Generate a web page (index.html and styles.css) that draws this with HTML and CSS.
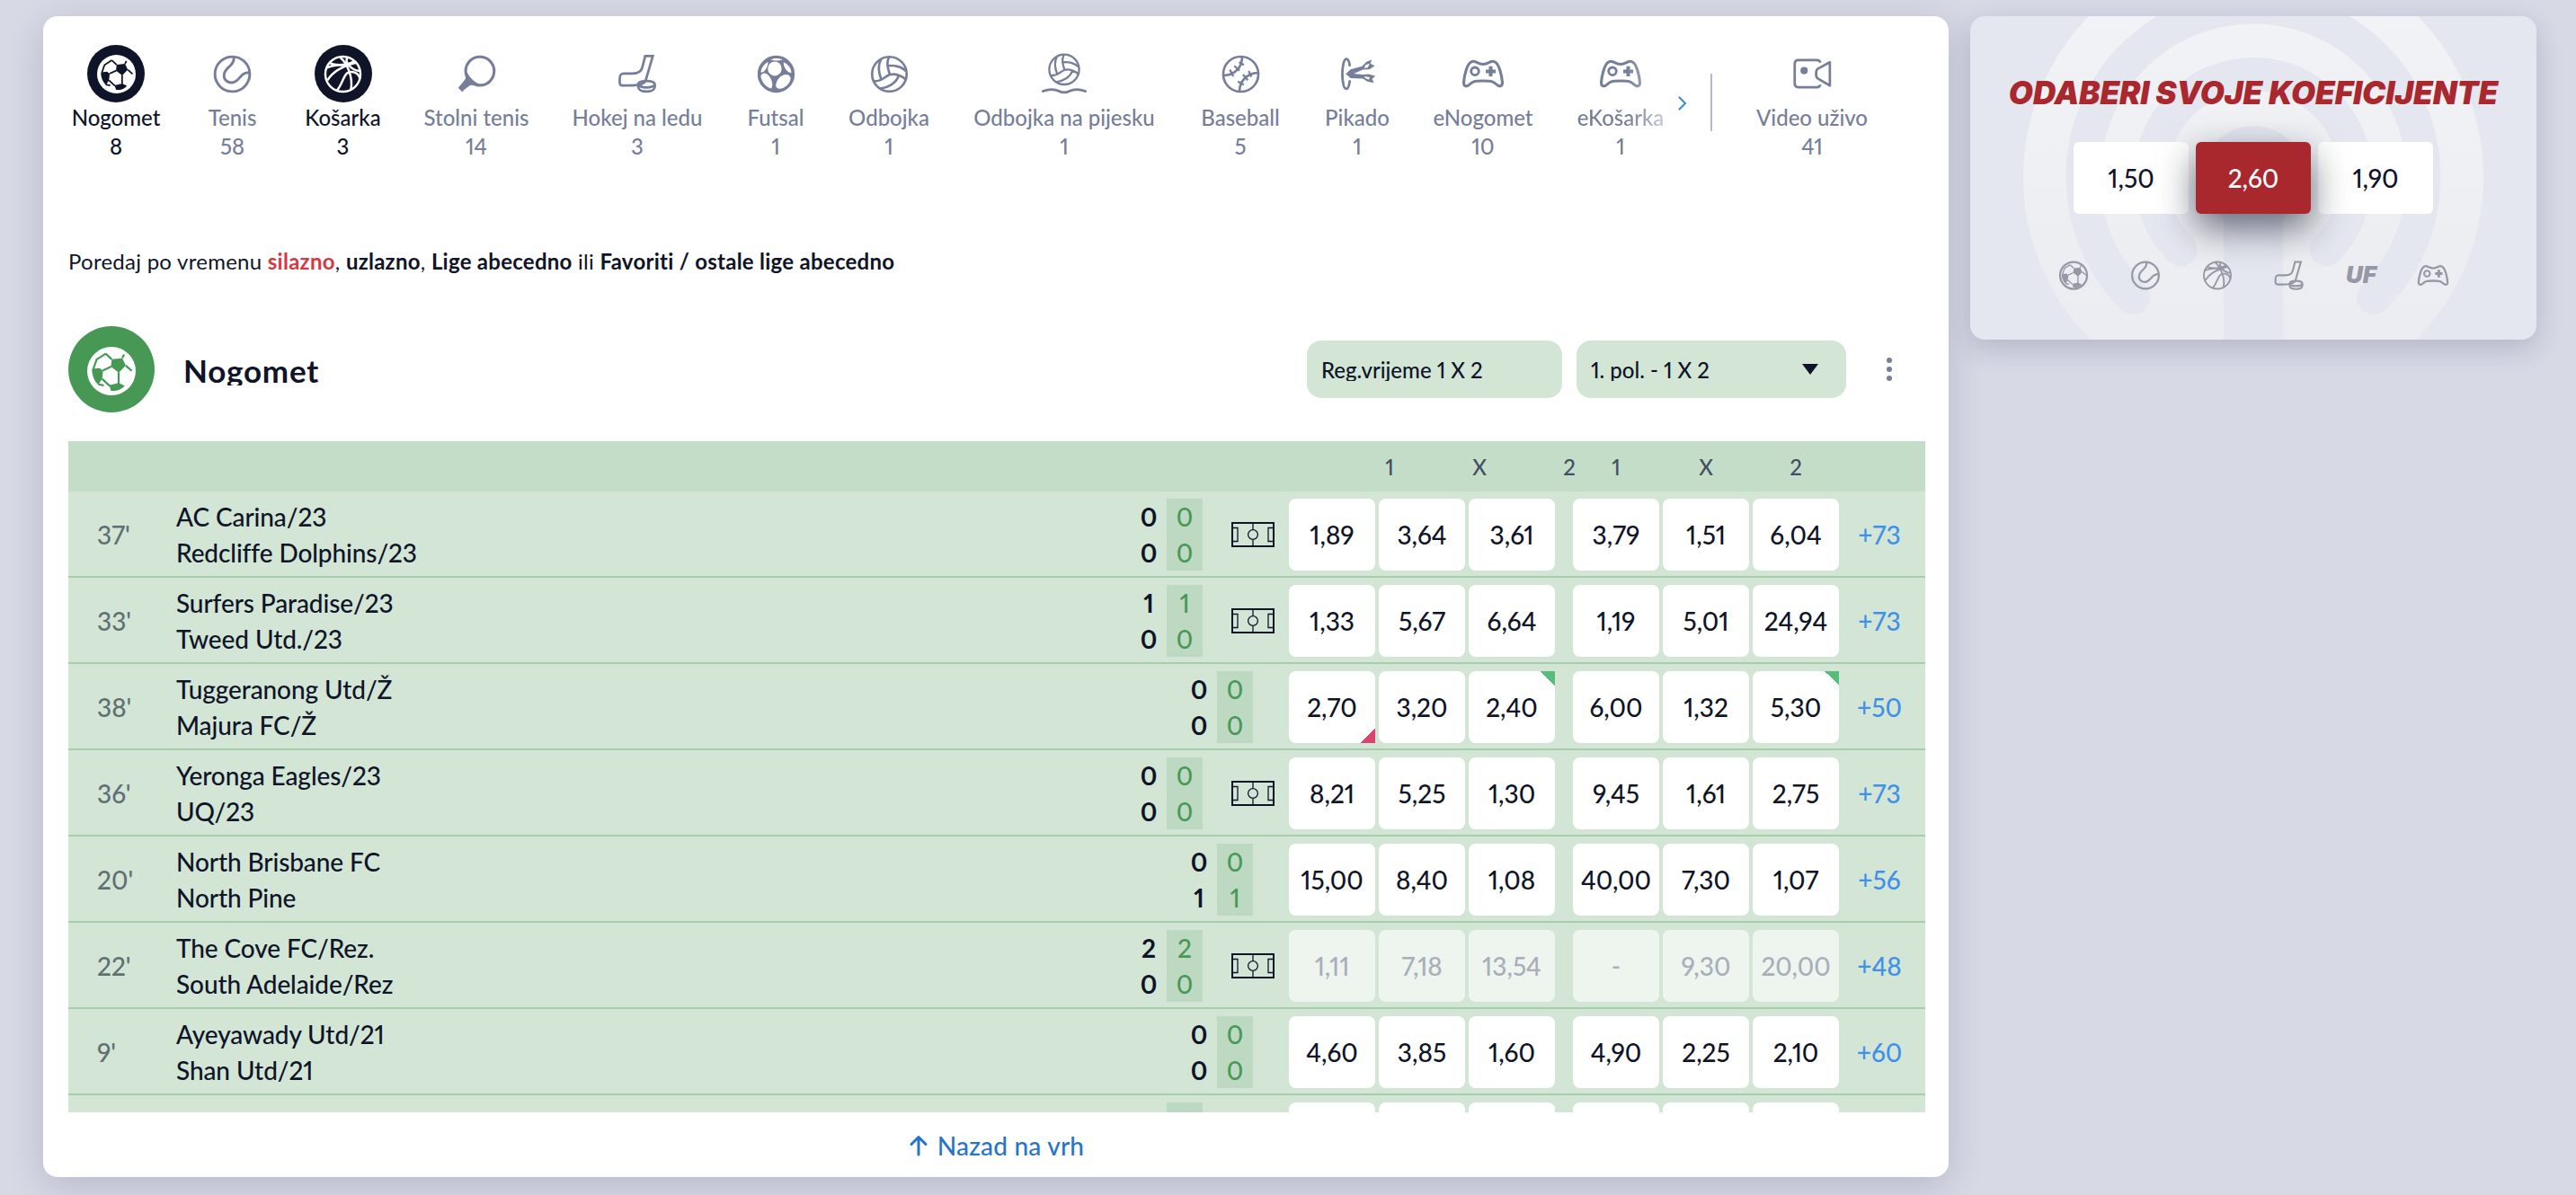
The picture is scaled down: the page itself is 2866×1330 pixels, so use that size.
FILE: index.html
```html
<!DOCTYPE html>
<html lang="hr">
<head>
    <meta charset="UTF-8">
    <meta name="viewport" content="width=device-width, initial-scale=1.0">
    <title>Nogomet uživo</title>
    <link rel="stylesheet" href="styles.css">
</head>
<body>
    <svg class="sprite" width="0" height="0">
        <symbol id="seams" viewBox="0 0 44 44">
            <path fill="currentColor" d="M22.3 11.3L31.8 10.3L35 17L28.6 23.5L21.5 18ZM4.3 20L11.5 19.3L14.3 21.8L13.6 29L10 34.5C6.5 31 4.3 26 4.3 20ZM20 34.8L28.5 32.8L34 35.2C31 39 27 40.2 21.6 40Z"/>
            <path fill="none" stroke="currentColor" stroke-width="1.8" d="M31.8 10.3L33.4 7M22.3 11.3L16.8 6.2M35 17L40.4 21.8M28.5 23V33.5M21.8 18L14 21.5M13.5 29L20.5 35.5M5.6 20L8.5 11.5L16.8 6.2M10 34L15 35"/>
        </symbol>
        <symbol id="tennis" viewBox="0 0 44 44">
            <g fill="none" stroke="currentColor" stroke-width="3">
                <circle cx="22" cy="22" r="19.8"/>
                <path d="M23.8 2.5C24.5 13.5 12.5 14 12.5 23.5C12.5 30.5 20.5 34 26 30C31.5 26.5 33 19.5 41.5 20.3"/>
            </g>
        </symbol>
        <symbol id="basket" viewBox="0 0 44 44">
            <g fill="none" stroke="currentColor" stroke-width="2.5">
                <circle cx="22" cy="22" r="20"/>
                <path d="M7.5 9.5C14 12.5 29 12 34.5 7M3 15C11 11 23 11 28 13M4.5 29C11 18 23 12.5 37 9M15 41C24.5 30 22 15.5 36.5 20.5C40 22 40.5 24 41.5 27M19 3C27 9.5 34 26 31 40M28 2.5C22.5 7 31 17.5 41 18.5"/>
            </g>
        </symbol>
        <symbol id="paddle" viewBox="0 0 44 44">
            <circle cx="25.5" cy="18.5" r="16.2" fill="none" stroke="currentColor" stroke-width="3.2"/>
            <path fill="currentColor" d="M9.5 20C9.5 24 10 26.5 8 29L.8 37.5L5.5 42.5L6.8 40.5L12.5 36C15 33.5 18 34.5 26 35.5L25 33.5C20 31.5 14 26.5 11 20Z"/>
        </symbol>
        <symbol id="hockey" viewBox="0 0 44 44">
            <g fill="none" stroke="currentColor" stroke-width="2.8">
                <path d="M30.5 2H39.2L31 30C29.5 34 21 35.5 12.5 35.5H5C1 35.5 1.5 32 1.5 28.5C1.5 23.5 2.5 21.8 6 21.8H16C23 21.8 26 19.8 27.2 15Z"/>
                <ellipse cx="32" cy="34" rx="9.4" ry="3.8"/>
                <path d="M22.6 34.2V37.5C23.5 44 40.5 44 41.4 37.5V34.2"/>
            </g>
        </symbol>
        <symbol id="futsal" viewBox="0 0 44 44">
            <circle cx="22" cy="22" r="19.7" fill="none" stroke="currentColor" stroke-width="2.9"/>
            <path fill="currentColor" fill-rule="evenodd" d="M22 2a20 20 0 1 0 .01 0ZM12.5 15.8a7.9 8.2 0 1 0 15.8 0a7.9 8.2 0 1 0-15.8 0ZM16 5.5C20 7 25.5 7 29.5 5.5C25.5 3.6 20 3.6 16 5.5ZM12.6 8.3C8 11 5 15.5 4.5 20C8.5 21 13.5 12.5 12.6 8.3ZM30.4 8.5C30.4 13.5 34 20.5 39.3 20.5C39.7 16 35 10 30.4 8.5ZM4.5 24C5 30 10 37 16.4 38.3C20.5 33 14 20.5 8.5 21C6.5 21.2 5 22.5 4.5 24ZM22 33C21 36 22.5 38.5 26 38.5C32 38.5 38 32.5 38.5 27C38.3 21.5 31.5 21.5 28 24C25 26 22.8 29 22 33Z"/>
        </symbol>
        <symbol id="volley" viewBox="0 0 44 44">
            <g fill="none" stroke="currentColor" stroke-width="2.7">
                <circle cx="22" cy="22" r="19.7"/>
                <path d="M21.5 2.5C18 10 20.5 16 22.5 22.5C29 21 37 24 41 28.5M12.5 5C8 13 10.5 22 12.5 27.5M20.7 12.5C28 11.5 37 14 40.5 18.5M3.5 30C13.5 31 16 25 22.5 22.5M32.5 24C29.5 32.5 20 37.5 11.5 38.5"/>
            </g>
        </symbol>
        <symbol id="baseball" viewBox="0 0 44 44">
            <g fill="none" stroke="currentColor" stroke-width="2.7">
                <circle cx="22" cy="22" r="20"/>
                <path d="M23.5 2.5C23.5 14 15 23.5 2.5 23.5M20.5 41.5C20.5 30 29 21 41.5 20.5"/>
                <path stroke-width="2.3" d="M20 8.5L25.5 11.5M14.5 12.5L20.5 18M9.5 17L13.5 24.5M31 18.5L34 25M24.5 22.5L30 29M18.5 30.5L25.5 34"/>
            </g>
        </symbol>
        <symbol id="darts" viewBox="0 0 44 44">
            <path fill="none" stroke="currentColor" stroke-width="2.8" stroke-linecap="round" d="M13 12C11.5 2.5 7.5 3 5.8 10C4.3 17 4.3 27 5.8 34C7.5 41 11.5 41 13 30"/>
            <path fill="currentColor" fill-rule="evenodd" d="M8.5 21.8L14 16.5L27 13L32 8L38 5.5L36.5 10L41.5 12.5L35.5 16.5L28 17L17.5 21.5L28 22.5L34.5 22L42 24L38.5 27.5L40.5 32L33 30.5L28 27L14 26.5ZM29.5 15L33.5 14.5L35.5 10L31 11.5ZM30 26L34.5 28.5L36 25.5L30 24.5Z"/>
        </symbol>
        <symbol id="pad" viewBox="0 0 48 44">
            <g fill="none" stroke="currentColor" stroke-width="3.1">
                <path d="M12 8.5C15 7 18 11.5 24 11.5C30 11.5 33 7 36 8.5C42 9.5 45 25 45.5 32C45.5 37 41.5 36.5 39 34C35 30 32 30 24 30C16 30 13 30 9 34C6.5 36.5 2.5 37 2.5 32C3 25 6 9.5 12 8.5Z"/>
                <circle cx="15" cy="19.3" r="4.3" stroke-width="2.8"/>
                <path stroke-width="4" d="M32.5 13.8V25M27 19.4H38"/>
            </g>
        </symbol>
        <symbol id="pitch" viewBox="0 0 48 28">
            <g fill="none" stroke="currentColor">
                <rect x="1" y="1" width="46" height="26" stroke-width="2"/>
                <path stroke-width="1.3" d="M24 1V8.5M24 19.5V27M1 6.5H7V21.5H1M47 6.5H41V21.5H47"/>
                <circle cx="24" cy="14" r="5.4" stroke-width="1.3"/>
            </g>
        </symbol>
    </svg>

    <div class="page">
        <main class="panel">
            <nav class="sports">
                <div class="sports-list">
                    <a class="sport active">
                        <span class="sport-icon"><svg class="icon ball"><use href="#seams"/></svg></span>
                        <span>Nogomet</span>
                        <span>8</span>
                    </a>
                    <a class="sport">
                        <span class="sport-icon"><svg class="icon"><use href="#tennis"/></svg></span>
                        <span>Tenis</span>
                        <span>58</span>
                    </a>
                    <a class="sport active">
                        <span class="sport-icon"><svg class="icon"><use href="#basket"/></svg></span>
                        <span>Košarka</span>
                        <span>3</span>
                    </a>
                    <a class="sport">
                        <span class="sport-icon"><svg class="icon"><use href="#paddle"/></svg></span>
                        <span>Stolni tenis</span>
                        <span>14</span>
                    </a>
                    <a class="sport">
                        <span class="sport-icon"><svg class="icon tall"><use href="#hockey"/></svg></span>
                        <span>Hokej na ledu</span>
                        <span>3</span>
                    </a>
                    <a class="sport">
                        <span class="sport-icon"><svg class="icon"><use href="#futsal"/></svg></span>
                        <span>Futsal</span>
                        <span>1</span>
                    </a>
                    <a class="sport">
                        <span class="sport-icon"><svg class="icon"><use href="#volley"/></svg></span>
                        <span>Odbojka</span>
                        <span>1</span>
                    </a>
                    <a class="sport">
                        <span class="sport-icon">
                            <svg class="icon beach" viewBox="0 0 56 50">
                                <use href="#volley" x="8" y="0" width="40" height="40"/>
                                <path fill="none" stroke="currentColor" stroke-width="3" stroke-linecap="round" d="M2.5 46C9 43.5 17 43.5 22 46C26 48 30 48 34 46C39 43.5 47 43.5 53.5 46"/>
                            </svg>
                        </span>
                        <span>Odbojka na pijesku</span>
                        <span>1</span>
                    </a>
                    <a class="sport">
                        <span class="sport-icon"><svg class="icon"><use href="#baseball"/></svg></span>
                        <span>Baseball</span>
                        <span>5</span>
                    </a>
                    <a class="sport">
                        <span class="sport-icon"><svg class="icon"><use href="#darts"/></svg></span>
                        <span>Pikado</span>
                        <span>1</span>
                    </a>
                    <a class="sport">
                        <span class="sport-icon"><svg class="icon pad"><use href="#pad"/></svg></span>
                        <span>eNogomet</span>
                        <span>10</span>
                    </a>
                    <a class="sport faded">
                        <span class="sport-icon"><svg class="icon pad"><use href="#pad"/></svg></span>
                        <span>eKošarka</span>
                        <span>1</span>
                    </a>
                </div>
                <svg class="next" viewBox="0 0 10 16"><path fill="none" stroke="#3d90e8" stroke-width="2.2" stroke-linecap="round" d="M1.5 1.5L8 8L1.5 14.5"/></svg>
                <div class="divider"></div>
                <a class="sport live">
                    <span class="sport-icon">
                        <svg class="icon video" viewBox="0 0 44 34">
                            <g fill="none" stroke="currentColor" stroke-width="2.8" stroke-linejoin="round">
                                <path d="M31 4.5C30.5 2.5 29.5 1.6 27 1.6H6C3 1.6 1.8 3 1.8 6V28C1.8 31 3 32.4 6 32.4H27C29.5 32.4 30.5 31.5 31 29.5"/>
                                <path d="M41.8 4L28 11.5C25.5 13 25.5 21 28 22.5L41.8 30.5Z"/>
                            </g>
                            <circle cx="12.5" cy="13.5" r="4.2" fill="currentColor"/>
                        </svg>
                    </span>
                    <span>Video uživo</span>
                    <span>41</span>
                </a>
            </nav>

            <p class="sort">Poredaj po vremenu <b class="current">silazno</b>, <b>uzlazno</b>, <b>Lige abecedno</b> ili <b>Favoriti / ostale lige abecedno</b></p>

            <div class="section-head">
                <span class="section-icon"><svg class="icon ball"><use href="#seams"/></svg></span>
                <h2>Nogomet</h2>
                <div class="select reg"><span>Reg.vrijeme 1 X 2</span></div>
                <div class="select half-time"><span>1. pol. - 1 X 2</span><i class="caret"></i></div>
                <div class="dots"><i></i><i></i><i></i></div>
            </div>

            <div class="table">
                <div class="table-head">
                    <div class="labels first"><span>1</span><span>X</span><span>2</span></div>
                    <div class="labels"><span>1</span><span>X</span><span>2</span></div>
                </div>
                <div class="match">
                    <div class="time">37'</div>
                    <div class="teams"><span>AC Carina/23</span><span>Redcliffe Dolphins/23</span></div>
                    <div class="score"><span>0</span><span>0</span></div>
                    <div class="half"><span>0</span><span>0</span></div>
                    <svg class="pitch"><use href="#pitch"/></svg>
                    <div class="odds"><span>1,89</span><span>3,64</span><span>3,61</span></div>
                    <div class="odds"><span>3,79</span><span>1,51</span><span>6,04</span></div>
                    <a class="more">+73</a>
                </div>
                <div class="match">
                    <div class="time">33'</div>
                    <div class="teams"><span>Surfers Paradise/23</span><span>Tweed Utd./23</span></div>
                    <div class="score"><span>1</span><span>0</span></div>
                    <div class="half"><span>1</span><span>0</span></div>
                    <svg class="pitch"><use href="#pitch"/></svg>
                    <div class="odds"><span>1,33</span><span>5,67</span><span>6,64</span></div>
                    <div class="odds"><span>1,19</span><span>5,01</span><span>24,94</span></div>
                    <a class="more">+73</a>
                </div>
                <div class="match">
                    <div class="time">38'</div>
                    <div class="teams"><span>Tuggeranong Utd/Ž</span><span>Majura FC/Ž</span></div>
                    <div class="score"><span>0</span><span>0</span></div>
                    <div class="half"><span>0</span><span>0</span></div>
                    <div class="odds"><span class="down">2,70</span><span>3,20</span><span class="up">2,40</span></div>
                    <div class="odds"><span>6,00</span><span>1,32</span><span class="up">5,30</span></div>
                    <a class="more">+50</a>
                </div>
                <div class="match">
                    <div class="time">36'</div>
                    <div class="teams"><span>Yeronga Eagles/23</span><span>UQ/23</span></div>
                    <div class="score"><span>0</span><span>0</span></div>
                    <div class="half"><span>0</span><span>0</span></div>
                    <svg class="pitch"><use href="#pitch"/></svg>
                    <div class="odds"><span>8,21</span><span>5,25</span><span>1,30</span></div>
                    <div class="odds"><span>9,45</span><span>1,61</span><span>2,75</span></div>
                    <a class="more">+73</a>
                </div>
                <div class="match">
                    <div class="time">20'</div>
                    <div class="teams"><span>North Brisbane FC</span><span>North Pine</span></div>
                    <div class="score"><span>0</span><span>1</span></div>
                    <div class="half"><span>0</span><span>1</span></div>
                    <div class="odds"><span>15,00</span><span>8,40</span><span>1,08</span></div>
                    <div class="odds"><span>40,00</span><span>7,30</span><span>1,07</span></div>
                    <a class="more">+56</a>
                </div>
                <div class="match">
                    <div class="time">22'</div>
                    <div class="teams"><span>The Cove FC/Rez.</span><span>South Adelaide/Rez</span></div>
                    <div class="score"><span>2</span><span>0</span></div>
                    <div class="half"><span>2</span><span>0</span></div>
                    <svg class="pitch"><use href="#pitch"/></svg>
                    <div class="odds disabled"><span>1,11</span><span>7,18</span><span>13,54</span></div>
                    <div class="odds disabled"><span>-</span><span>9,30</span><span>20,00</span></div>
                    <a class="more">+48</a>
                </div>
                <div class="match">
                    <div class="time">9'</div>
                    <div class="teams"><span>Ayeyawady Utd/21</span><span>Shan Utd/21</span></div>
                    <div class="score"><span>0</span><span>0</span></div>
                    <div class="half"><span>0</span><span>0</span></div>
                    <div class="odds"><span>4,60</span><span>3,85</span><span>1,60</span></div>
                    <div class="odds"><span>4,90</span><span>2,25</span><span>2,10</span></div>
                    <a class="more">+60</a>
                </div>
                <div class="match">
                    <div class="time"></div>
                    <div class="teams"></div>
                    <div class="score"></div>
                    <div class="half"></div>
                    <svg class="pitch"></svg>
                    <div class="odds"><span></span><span></span><span></span></div>
                    <div class="odds"><span></span><span></span><span></span></div>
                    <a class="more"></a>
                </div>
            </div>

            <a class="to-top">
                <svg viewBox="0 0 20 24"><path fill="none" stroke="currentColor" stroke-width="3" stroke-linecap="round" stroke-linejoin="round" d="M10 22V2.5M2 10.5L10 2.5L18 10.5"/></svg>
                <span>Nazad na vrh</span>
            </a>
        </main>

        <aside class="ticket">
            <svg class="signal" viewBox="0 0 630 360">
                <defs>
                    <linearGradient id="rings" x1="0" y1="0" x2="0" y2="1">
                        <stop offset="0.1" stop-color="#f2f3f6"/>
                        <stop offset="0.9" stop-color="#ebecf1"/>
                    </linearGradient>
                </defs>
                <circle cx="315" cy="179" r="256" fill="url(#rings)"/>
                <g fill="none" stroke="#e4e7ef" stroke-linecap="round">
                    <path stroke-width="38" d="M181 313A189.5 189.5 0 1 1 449 313"/>
                    <path stroke-width="37" d="M234 260A114.5 114.5 0 1 1 396 260"/>
                </g>
                <circle cx="315" cy="179" r="57" fill="#e4e7ef"/>
                <rect x="282" y="200" width="66" height="160" fill="#e4e7ef"/>
            </svg>
            <h3>ODABERI SVOJE KOEFICIJENTE</h3>
            <div class="picks">
                <span>1,50</span>
                <span class="picked">2,60</span>
                <span>1,90</span>
            </div>
            <div class="ticket-sports">
                <svg viewBox="0 0 44 44"><circle cx="22" cy="22" r="20" fill="none" stroke="currentColor" stroke-width="3"/><use href="#seams"/></svg>
                <svg><use href="#tennis"/></svg>
                <svg><use href="#basket"/></svg>
                <svg><use href="#hockey"/></svg>
                <span class="uf">UF</span>
                <svg><use href="#pad"/></svg>
            </div>
        </aside>
    </div>
</body>
</html>
```

FILE: styles.css
```css
* {
    box-sizing: border-box;
}
body {
    margin: 0;
    height: 1330px;
    overflow: hidden;
    background-color: #d7d9e5;
    color: #0f1428;
    font-family: Lato, "Open Sans", sans-serif;
    font-size: 24px;
    font-weight: 500;
    font-variant-numeric: proportional-nums;
}
.sprite {
    position: absolute;
}
.page {
    display: flex;
    align-items: flex-start;
    gap: 24px;
    padding: 18px 44px 20px 48px;
}
.panel {
    width: 2120px;
    height: 1292px;
    padding: 0 26px 0 28px;
    background-color: #fff;
    border-radius: 16px;
    box-shadow: 0 10px 40px rgba(25, 30, 70, 0.17);
}

/* sports bar */
.sports {
    display: flex;
    height: 172px;
    margin-left: -23px;
    padding-top: 32px;
}
.sports-list {
    display: grid;
    grid-template-columns: 152px 107px 139px 158px 200px 108px 144px 246px 146px 114px 166px 140px;
    margin-right: -6px;
}
.sport {
    display: flex;
    flex-direction: column;
    align-items: center;
    color: #767e99;
    line-height: 32px;
    white-space: nowrap;
}
.sport.active {
    color: #0f1428;
}
.sport-icon {
    display: flex;
    align-items: center;
    justify-content: center;
    width: 64px;
    height: 64px;
    margin-bottom: 1px;
    border-radius: 50%;
}
.sport.active .sport-icon {
    background-color: #0f1428;
    color: #fff;
}
.icon {
    width: 43px;
    height: 43px;
}
.icon.ball {
    background-color: #fff;
    border-radius: 50%;
    color: #0f1428;
}
.icon.tall {
    height: 46px;
}
.icon.beach {
    width: 52px;
    height: 48px;
}
.icon.pad {
    width: 48px;
    height: 44px;
}
.icon.video {
    height: 34px;
}
.faded {
    -webkit-mask-image: linear-gradient(90deg, #000 55%, transparent 105%);
    mask-image: linear-gradient(90deg, #000 55%, transparent 105%);
}
.next {
    width: 10px;
    height: 16px;
    margin: 57px 26px 0 0;
}
.divider {
    width: 2px;
    height: 64px;
    margin-top: 32px;
    background-color: #b6bacd;
}
.live {
    width: 222px;
}

.sort {
    height: 32px;
    margin: 84px 0 57px;
    letter-spacing: 0.26px;
    line-height: 34px;
    font-weight: 400;
}
.sort b {
    font-weight: 700;
}
.sort .current {
    color: #d93843;
}

/* section title and market selects */
.section-head {
    display: flex;
    align-items: center;
    height: 96px;
    margin-bottom: 32px;
}
.section-icon {
    display: flex;
    align-items: center;
    justify-content: center;
    width: 96px;
    height: 96px;
    padding-top: 3px;
    border-radius: 50%;
    background-color: #469854;
}
.section-icon .icon {
    width: 54px;
    height: 54px;
    color: #469854;
}
h2 {
    flex: 1;
    height: 36px;
    margin: 0 0 0 32px;
    overflow: hidden;
    font-size: 35px;
    letter-spacing: 0.8px;
    line-height: 38px;
}
.select {
    display: flex;
    align-items: center;
    justify-content: space-between;
    height: 64px;
    margin-right: 16px;
    padding: 0 31px 0 16px;
    border-radius: 16px;
    background-color: #d3e6d6;
}
.select span {
    height: 26px;
    overflow: hidden;
    line-height: 27px;
}
.reg {
    width: 284px;
}
.half-time {
    width: 300px;
}
.caret {
    border: 9px solid transparent;
    border-top: 12px solid #0f1428;
    border-bottom: 0;
}
.dots {
    display: flex;
    flex-direction: column;
    align-items: center;
    gap: 4px;
    width: 64px;
    margin-right: 8px;
}
.dots i {
    width: 6px;
    height: 6px;
    border-radius: 50%;
    background-color: #767e99;
}

/* matches */
.table {
    height: 747px;
    overflow: hidden;
    background-color: #d3e6d6;
}
.table-head {
    display: flex;
    justify-content: flex-end;
    height: 56px;
    padding-right: 94px;
    background-color: #c4ddc9;
    color: #434d64;
    line-height: 57px;
}
.labels {
    display: flex;
}
.labels span {
    width: 100px;
    text-align: center;
}
.labels.first {
    margin-right: -48px;
}
.match {
    display: flex;
    align-items: center;
    height: 96px;
    padding: 8px 0 6px;
    border-bottom: 2px solid #a5cdab;
    font-size: 28px;
}
.time {
    width: 120px;
    padding-left: 32px;
    color: #616f74;
}
.teams {
    flex: 1;
    letter-spacing: -0.1px;
}
.teams span, .score span, .half span {
    display: block;
    line-height: 40px;
}
.score, .half {
    width: 40px;
    height: 80px;
    text-align: center;
}
.score {
    font-weight: 700;
}
.half {
    margin-right: 40px;
    background-color: #bdd9c2;
    color: #469854;
}
.pitch {
    width: 48px;
    height: 28px;
    margin: 0 16px 0 -8px;
}
.odds {
    display: flex;
    gap: 4px;
    margin-right: 20px;
}
.odds span {
    width: 96px;
    height: 80px;
    border-radius: 8px;
    background: #fff;
    line-height: 80px;
    text-align: center;
}
.odds .up {
    border-top-right-radius: 0;
    background: linear-gradient(to top right, #fff 50%, #57bd7b 50%) top right / 16px 16px no-repeat #fff;
}
.odds .down {
    border-bottom-right-radius: 0;
    background: linear-gradient(to bottom right, #fff 50%, #db4470 50%) bottom right / 16px 16px no-repeat #fff;
}
.odds.disabled span {
    background: #edf5ee;
    color: #a9aebb;
}
.more {
    width: 90px;
    margin: 0 6px 0 -20px;
    color: #4090ea;
    text-align: center;
}

.to-top {
    display: flex;
    align-items: center;
    justify-content: center;
    gap: 11px;
    height: 72px;
    padding-top: 2px;
    color: #2874c8;
    font-size: 28px;
    letter-spacing: 0.2px;
}
.to-top svg {
    width: 20px;
    height: 24px;
}

/* ticket */
.ticket {
    position: relative;
    width: 630px;
    height: 360px;
    padding-top: 65px;
    overflow: hidden;
    border-radius: 16px;
    background-color: #e4e7ef;
    box-shadow: 0 10px 30px rgba(25, 30, 70, 0.18);
}
.signal {
    position: absolute;
    top: 0;
    left: 0;
    width: 630px;
    height: 360px;
}
.ticket h3, .picks, .ticket-sports {
    position: relative;
}
.ticket h3 {
    margin: 0 0 35px;
    color: #a9282e;
    font-family: Inter, Lato, sans-serif;
    font-size: 35px;
    font-style: italic;
    font-weight: 900;
    letter-spacing: -0.1px;
    line-height: 40px;
    text-align: center;
    white-space: nowrap;
}
.picks {
    display: flex;
    justify-content: center;
    gap: 8px;
    margin-bottom: 50px;
    font-size: 28px;
}
.picks span {
    width: 128px;
    height: 80px;
    border-radius: 6px;
    background-color: #fff;
    line-height: 80px;
    text-align: center;
}
.picks .picked {
    z-index: 1;
    background-color: #a9282e;
    box-shadow: 0 16px 40px rgba(15, 20, 40, 0.6);
    color: #fff;
}
.ticket-sports {
    display: grid;
    grid-template-columns: repeat(6, 80px);
    justify-content: center;
    justify-items: center;
    align-items: center;
    height: 36px;
    color: #9598a5;
}
.ticket-sports svg {
    width: 36px;
    height: 33px;
}
.uf {
    font-family: Inter, Lato, sans-serif;
    font-size: 26px;
    font-style: italic;
    font-weight: 900;
    line-height: 30px;
}
```
